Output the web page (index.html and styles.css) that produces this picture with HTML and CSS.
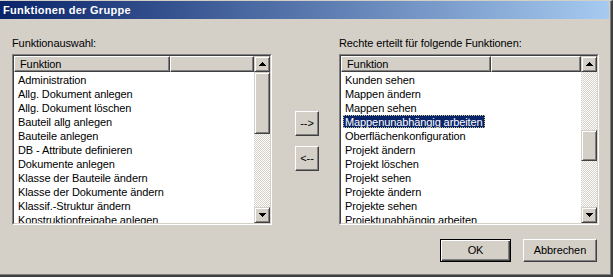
FILE: index.html
```html
<!DOCTYPE html>
<html lang="de">
<head>
<meta charset="utf-8">
<title>Funktionen der Gruppe</title>
<link rel="stylesheet" href="styles.css">
</head>
<body>
<div class="window">
  <div class="frame">
    <div class="titlebar">Funktionen der Gruppe</div>
    <div class="content">
      <div class="panel">
        <div class="label">Funktionauswahl:</div>
        <div class="listbox">
          <div class="listinner">
            <div class="listarea">
              <div class="header"><div class="hcell c1">Funktion</div><div class="hcell c2"></div></div>
              <div class="rows">
                <div class="row"><span class="txt">Administration</span></div>
                <div class="row"><span class="txt">Allg. Dokument anlegen</span></div>
                <div class="row"><span class="txt">Allg. Dokument löschen</span></div>
                <div class="row"><span class="txt">Bauteil allg anlegen</span></div>
                <div class="row"><span class="txt">Bauteile anlegen</span></div>
                <div class="row"><span class="txt">DB - Attribute definieren</span></div>
                <div class="row"><span class="txt">Dokumente anlegen</span></div>
                <div class="row"><span class="txt">Klasse der Bauteile ändern</span></div>
                <div class="row"><span class="txt">Klasse der Dokumente ändern</span></div>
                <div class="row"><span class="txt">Klassif.-Struktur ändern</span></div>
                <div class="row"><span class="txt">Konstruktionfreigabe anlegen</span></div>
              </div>
            </div>
            <div class="scrollbar">
              <div class="sbtn"><svg width="7" height="4" viewBox="0 0 7 4"><path d="M3 0h1v1h1v1h1v1h1v1H0V3h1V2h1V1h1z" fill="#000"/></svg></div>
              <div class="track">
                <div class="thumb" style="height:62px"></div>
              </div>
              <div class="sbtn"><svg width="7" height="4" viewBox="0 0 7 4"><path d="M0 0h7v1H6v1H5v1H4v1H3V3H2V2H1V1H0z" fill="#000"/></svg></div>
            </div>
          </div>
        </div>
      </div>
      <div class="movers">
        <button class="btn mover first">--&gt;</button>
        <button class="btn mover">&lt;--</button>
      </div>
      <div class="panel">
        <div class="label">Rechte erteilt für folgende Funktionen:</div>
        <div class="listbox">
          <div class="listinner">
            <div class="listarea">
              <div class="header"><div class="hcell c1 r1">Funktion</div><div class="hcell c2"></div></div>
              <div class="rows">
                <div class="row"><span class="txt">Kunden sehen</span></div>
                <div class="row"><span class="txt">Mappen ändern</span></div>
                <div class="row"><span class="txt">Mappen sehen</span></div>
                <div class="row"><span class="txt selected">Mappenunabhängig arbeiten</span></div>
                <div class="row"><span class="txt">Oberflächenkonfiguration</span></div>
                <div class="row"><span class="txt">Projekt ändern</span></div>
                <div class="row"><span class="txt">Projekt löschen</span></div>
                <div class="row"><span class="txt">Projekt sehen</span></div>
                <div class="row"><span class="txt">Projekte ändern</span></div>
                <div class="row"><span class="txt">Projekte sehen</span></div>
                <div class="row"><span class="txt">Projektunabhängig arbeiten</span></div>
              </div>
            </div>
            <div class="scrollbar">
              <div class="sbtn"><svg width="7" height="4" viewBox="0 0 7 4"><path d="M3 0h1v1h1v1h1v1h1v1H0V3h1V2h1V1h1z" fill="#000"/></svg></div>
              <div class="track">
                <div class="gap" style="height:58px"></div>
                <div class="thumb" style="height:31px"></div>
              </div>
              <div class="sbtn"><svg width="7" height="4" viewBox="0 0 7 4"><path d="M0 0h7v1H6v1H5v1H4v1H3V3H2V2H1V1H0z" fill="#000"/></svg></div>
            </div>
          </div>
        </div>
      </div>
    </div>
    <div class="footer">
      <button class="btn dlg default">OK</button>
      <button class="btn dlg cancel">Abbrechen</button>
    </div>
  </div>
</div>
</body>
</html>
```

FILE: styles.css
```css
* { box-sizing: border-box; }
html, body { margin: 0; padding: 0; }
body {
  background: #d4d0c8;
  font-family: "Liberation Sans", Arial, sans-serif;
  font-size: 11px;
  letter-spacing: -0.1px;
  color: #000;
  width: 613px;
  height: 277px;
  overflow: hidden;
}
.window {
  width: 613px;
  height: 277px;
  border-top: 1px solid #d4d0c8;
  border-right: 2px solid #404040;
  border-bottom: 2px solid #404040;
  background: #d4d0c8;
}
.frame {
  height: 100%;
  border-right: 1px solid #808080;
  border-bottom: 1px solid #808080;
  display: flex;
  flex-direction: column;
}
.titlebar {
  height: 18px;
  margin-right: 1px;
  background: linear-gradient(to right, #0a246a, #a6caf0);
  color: #fff;
  font-weight: bold;
  letter-spacing: 0.3px;
  line-height: 18px;
  padding-left: 3px;
  white-space: nowrap;
}
.content {
  display: flex;
  padding-left: 12px;
  margin-top: 18px;
}
.panel { width: 260px; }
.label {
  height: 13px;
  line-height: 13px;
  margin-bottom: 4px;
  white-space: nowrap;
}
.listbox {
  width: 260px;
  height: 171px;
  border: 1px solid;
  border-color: #808080 #fff #fff #808080;
}
.listinner {
  height: 100%;
  border: 1px solid;
  border-color: #404040 #d4d0c8 #d4d0c8 #404040;
  display: flex;
  background: #fff;
}
.listarea {
  flex: 1;
  overflow: hidden;
}
.header {
  display: flex;
  height: 16px;
}
.hcell {
  height: 16px;
  background: #d4d0c8;
  border-top: 1px solid #fff;
  border-left: 1px solid #fff;
  border-bottom: 1px solid #404040;
  border-right: 1px solid #404040;
  box-shadow: inset -1px -1px #808080;
  line-height: 14px;
  padding-left: 5px;
  white-space: nowrap;
}
.c1 { width: 156px; }
.r1 { width: 150px; }
.c2 { flex: 1; }
.rows { overflow: hidden; height: 151px; }
.row {
  height: 14px;
  line-height: 14px;
  padding-top: 1px;
  white-space: nowrap;
}
.txt {
  display: inline-block;
  margin-left: 2px;
  padding: 0 2px;
  height: 13px;
}
.txt.selected {
  background: #0a246a;
  color: #fff;
  outline: 1px dotted #c8c890;
  outline-offset: -1px;
}
.scrollbar {
  width: 16px;
  display: flex;
  flex-direction: column;
}
.sbtn, .thumb {
  background: #d4d0c8;
  border: 1px solid;
  border-color: #d4d0c8 #404040 #404040 #d4d0c8;
  box-shadow: inset 1px 1px #fff, inset -1px -1px #808080;
}
.sbtn {
  height: 16px;
  display: flex;
  align-items: center;
  justify-content: center;
  flex: none;
}
.sbtn svg { display: block; }
.track {
  flex: 1;
  display: flex;
  flex-direction: column;
  background: repeating-conic-gradient(#fff 0 25%, #d4d0c8 0 50%) 0 0 / 2px 2px;
}
.thumb, .gap { flex: none; }
.movers {
  width: 24px;
  margin: 0 20px 0 23px;
  display: flex;
  flex-direction: column;
}
.btn {
  font-family: "Liberation Sans", Arial, sans-serif;
  font-size: 11px;
  letter-spacing: -0.1px;
  color: #000;
  background: #d4d0c8;
  border: 1px solid;
  border-color: #fff #404040 #404040 #fff;
  box-shadow: inset -1px -1px #808080;
  padding: 0;
  margin: 0;
  white-space: nowrap;
}
.mover {
  width: 24px;
  height: 25px;
  margin-top: 10px;
  line-height: 21px;
}
.mover.first { margin-top: 74px; }
.footer {
  display: flex;
  justify-content: flex-end;
  gap: 12px;
  padding-right: 13px;
  margin-top: 14px;
}
.dlg {
  height: 23px;
  line-height: 19px;
}
.default {
  width: 71px;
  border: 1px solid #000;
  box-shadow: inset 1px 1px #fff, inset -1px -1px #404040, inset -2px -2px #808080;
}
.cancel { width: 74px; }
```
